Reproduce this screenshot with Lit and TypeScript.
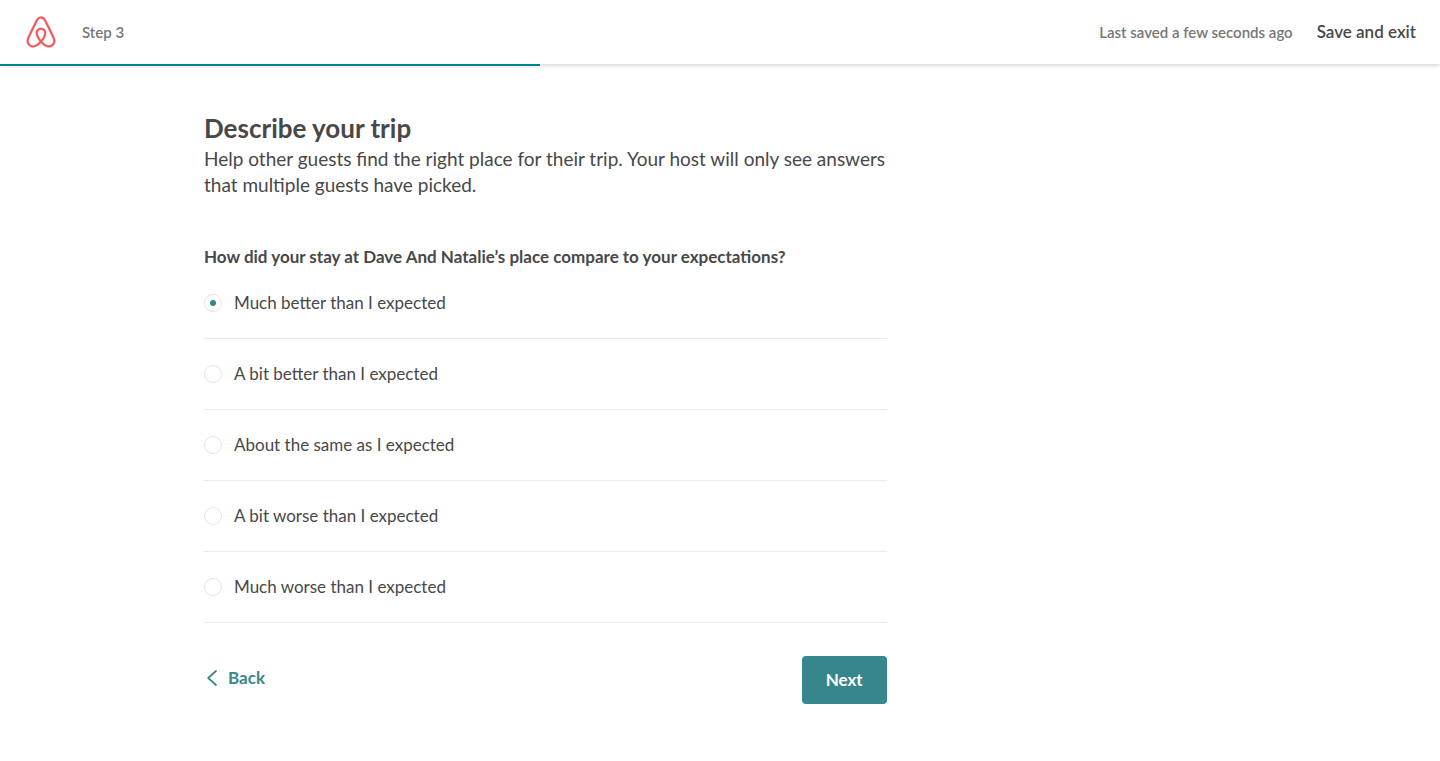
import { LitElement, html, css, svg } from "lit";
import { customElement, state } from "lit/decorators.js";

const OPTIONS = [
  "Much better than I expected",
  "A bit better than I expected",
  "About the same as I expected",
  "A bit worse than I expected",
  "Much worse than I expected",
];

const logoPath = svg`<path d="M499.3 736.7c-51-64-81-120.1-91-168.1-10-39-6-70 11-93 18-27 45-40 80-40s62 13 80 40c17 23 21 54 11 93-11 49-41 105-91 168.1zm362.2 43c-7 47-39 86-83 105-85 37-169.1-22-241.1-102 119.1-149.1 141.1-265.1 90-340.2-30-43-73-64-128.1-64-111 0-172.1 94-148.1 203.1 14 59 51 126.1 110 201.1-37 41-72 70-103 88-24 13-47 21-69 23-101 15-180.1-83-144.1-184.1 5-13 15-37 32-74l1-2c55-120.1 122.1-256.1 199.1-407.2l2-5 22-42c17-31 24-45 51-62 13-8 29-12 47-12 36 0 64 21 76 38 6 9 13 21 22 36l21 41 3 6c77 151.1 144.1 287.1 199.1 407.2l1 1 20 46 12 29c9.2 23.1 11.2 46.1 8.2 70.1zm46-90.1c-7-22-19-48-34-79v-1c-71-151.1-137.1-287.1-200.1-409.2l-4-6c-45-92-77-147.1-170.1-147.1-92 0-131.1 64-171.1 147.1l-3 6c-63 122.1-129.1 258.1-200.1 409.2v2l-21 46c-8 19-12 29-13 32-51 140.1 54 263.1 181.1 263.1 1 0 5 0 10-1h14c66-8 134.1-50 203.1-125.1 69 75 137.1 117.1 203.1 125.1h14c5 1 9 1 10 1 127.1.1 232.1-123 181.1-263.1z"/>`;

@customElement("app-root")
export class AppRoot extends LitElement {
  @state() private selected = 0;
  @state() private step = 3;
  private readonly totalSteps = 8;

  static styles = css`
    :host {
      display: block;
      min-height: 100vh;
      background: #fff;
      color: #484848;
      font-family: Lato, "Open Sans", sans-serif;
      font-size: 17px;
      line-height: 22px;
    }
    .header {
      display: flex;
      align-items: center;
      height: 64px;
      padding: 0 24px;
      gap: 24px;
      box-shadow: 0 2px 4px rgba(0, 0, 0, 0.15);
    }
    .logo {
      display: block;
      fill: #f4555a;
      stroke: #f4555a;
      stroke-width: 8;
    }
    .muted {
      color: #767676;
      font-size: 15px;
      font-weight: 600;
    }
    .saved {
      margin-left: auto;
    }
    button {
      font: inherit;
      font-weight: 600;
      border: 0;
      padding: 0;
      background: none;
      color: inherit;
      cursor: pointer;
    }
    .track {
      height: 2px;
    }
    .bar {
      height: 100%;
      background: #008489;
    }
    .container {
      box-sizing: border-box;
      max-width: 1080px;
      margin: 0 auto;
      padding: 48px 24px;
      display: grid;
      grid-template-columns: 2fr 1fr;
      gap: 8px;
    }
    h1 {
      margin: 0 0 4px;
      font-size: 26px;
      line-height: 28px;
      font-weight: 700;
    }
    .intro {
      margin: 0 0 48px;
      font-size: 19px;
      line-height: 26px;
    }
    fieldset {
      border: 0;
      margin: 0;
      padding: 0;
      min-width: 0;
    }
    legend {
      padding: 0;
      font-weight: 700;
    }
    .option {
      display: flex;
      align-items: center;
      gap: 12px;
      padding: 24px 0;
      border-bottom: 1px solid #ebebeb;
      cursor: pointer;
    }
    .radio {
      appearance: none;
      box-sizing: border-box;
      width: 18px;
      height: 18px;
      margin: 0;
      border: 1px solid #e4e4e4;
      border-radius: 50%;
      background: #fff;
      display: grid;
      place-items: center;
    }
    .radio:checked::before {
      content: "";
      width: 6px;
      height: 6px;
      border-radius: 50%;
      background: #37868b;
    }
    .actions {
      display: flex;
      justify-content: space-between;
      align-items: flex-start;
      padding-top: 33px;
    }
    .back {
      display: flex;
      align-items: center;
      gap: 8px;
      padding: 11px 0;
      color: #37868b;
      font-weight: 700;
    }
    .chevron {
      fill: none;
      stroke: currentColor;
      stroke-width: 1.7;
      stroke-linecap: round;
      stroke-linejoin: round;
    }
    .next {
      padding: 13px 24px;
      border-radius: 4px;
      background: #37868b;
      color: #fff;
      font-weight: 700;
    }
  `;

  render() {
    return html`
      <header class="header">
        <svg class="logo" width="34" height="34" viewBox="0 0 1000 1000" role="img" aria-label="Airbnb">${logoPath}</svg>
        <span class="muted">Step ${this.step}</span>
        <span class="muted saved">Last saved a few seconds ago</span>
        <button type="button">Save and exit</button>
      </header>
      <div class="track">
        <div class="bar" style="width: ${(this.step / this.totalSteps) * 100}%"></div>
      </div>
      <main class="container">
        <form @submit=${(e: Event) => e.preventDefault()}>
          <h1>Describe your trip</h1>
          <p class="intro">Help other guests find the right place for their trip. Your host will only see answers that multiple guests have picked.</p>
          <fieldset>
            <legend>How did your stay at Dave And Natalie’s place compare to your expectations?</legend>
            ${OPTIONS.map(
              (text, i) => html`
                <label class="option">
                  <input class="radio" type="radio" name="comparison" .checked=${i === this.selected} @change=${() => (this.selected = i)} />
                  <span>${text}</span>
                </label>
              `,
            )}
          </fieldset>
          <div class="actions">
            <button class="back" type="button">
              <svg class="chevron" width="16" height="16" viewBox="0 0 16 16" aria-hidden="true"><path d="M12 1 4.200 8 12 15" /></svg>
              Back
            </button>
            <button class="next" type="submit">Next</button>
          </div>
        </form>
      </main>
    `;
  }
}
